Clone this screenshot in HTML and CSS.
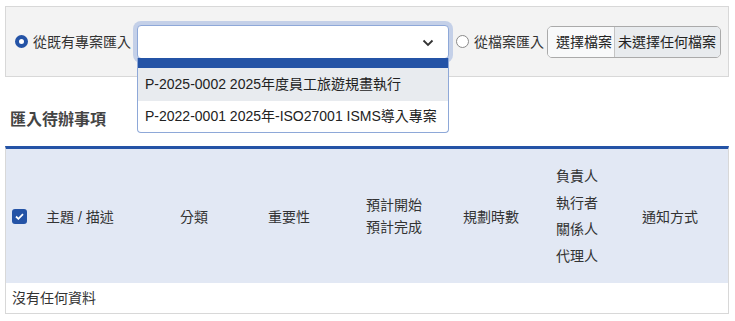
FILE: index.html
```html
<!DOCTYPE html>
<html lang="zh-Hant">
<head>
<meta charset="utf-8">
<link rel="stylesheet" href="styles.css">
</head>
<body>
<div class="panel">
  <label class="opt">
    <span class="radio checked"></span>
    <span class="opt-text">從既有專案匯入</span>
  </label>
  <div class="select">
    <svg class="chev" width="12" height="8" viewBox="0 0 12 8"><path d="M1.5 1.5 L6 6 L10.5 1.5" fill="none" stroke="#333" stroke-width="1.8"/></svg>
    <div class="list">
      <div class="list-sel"></div>
      <div class="list-item hover">P-2025-0002 2025年度員工旅遊規畫執行</div>
      <div class="list-item">P-2022-0001 2025年-ISO27001 ISMS導入專案</div>
    </div>
  </div>
  <label class="opt opt2">
    <span class="radio"></span>
    <span class="opt-text">從檔案匯入</span>
  </label>
  <div class="file">
    <span class="file-btn">選擇檔案</span>
    <span class="file-name">未選擇任何檔案</span>
  </div>
</div>

<h2 class="title">匯入待辦事項</h2>

<div class="table">
  <div class="thead">
    <div class="cell c0"><span class="check"><svg width="9" height="7" viewBox="0 0 9 7"><path d="M1 3.5 L3.4 5.8 L8 1.2" fill="none" stroke="#fff" stroke-width="1.8"/></svg></span></div>
    <div class="cell c1">主題 / 描述</div>
    <div class="cell c2">分類</div>
    <div class="cell c3">重要性</div>
    <div class="cell c4"><div class="two">預計開始<br>預計完成</div></div>
    <div class="cell c5">規劃時數</div>
    <div class="cell c6"><div class="four"><div>負責人</div><div>執行者</div><div>關係人</div><div>代理人</div></div></div>
    <div class="cell c7">通知方式</div>
  </div>
  <div class="empty">沒有任何資料</div>
</div>
</body>
</html>
```
FILE: styles.css
```css
* { box-sizing: border-box; }
body {
  margin: 0;
  background: #fff;
  font-family: "Liberation Sans", "Noto Sans CJK TC", sans-serif;
  font-size: 14px;
  color: #333;
}
.panel {
  margin: 6px 6px 0 5px;
  height: 71px;
  border: 1px solid #d8d8d8;
  background: #f3f3f3;
  display: flex;
  align-items: center;
  padding-left: 9px;
}
.opt {
  display: flex;
  align-items: center;
  gap: 5px;
}
.opt-text { color: #333; line-height: 20px; }
.radio {
  width: 13px;
  height: 13px;
  border-radius: 50%;
  border: 1px solid #8a8a8a;
  background: #fff;
  display: inline-block;
}
.radio.checked {
  border: 4px solid #2453a6;
}
.select {
  position: relative;
  margin-left: 6px;
  width: 312px;
  height: 34px;
  border: 1px solid #8ea8d8;
  border-radius: 4px;
  background: #fff;
  box-shadow: 0 0 0 4px #c4d0e8;
}
.chev {
  position: absolute;
  right: 14px;
  top: 13px;
}
.list {
  position: absolute;
  left: -1px;
  top: 32px;
  width: 312px;
  background: #fff;
  border: 1px solid #8ea8d8;
  border-top: none;
  border-radius: 0 0 4px 4px;
  z-index: 5;
}
.list-sel {
  height: 10px;
  background: #2453a6;
}
.list-item {
  height: 31px;
  line-height: 31px;
  padding-left: 7px;
  color: #222;
  white-space: nowrap;
}
.list-item.hover {
  background: #e8ebef;
  height: 33px;
  line-height: 33px;
}
.opt2 { margin-left: 7px; gap: 5px; }
.file {
  margin-left: 3px;
  display: flex;
  height: 32px;
  border: 1px solid #aaa;
  border-radius: 5px;
  overflow: hidden;
}
.file-btn {
  width: 67px;
  flex: none;
  background: #f8f9fa;
  border-right: 1px solid #c4c4c4;
  padding-left: 8px;
  line-height: 30px;
  color: #222;
  white-space: nowrap;
}
.file-name {
  width: 105px;
  flex: none;
  background: #e8ebee;
  padding-left: 3px;
  line-height: 30px;
  color: #222;
  white-space: nowrap;
}
.title {
  margin: 32px 0 0 10px;
  font-size: 16px;
  font-weight: bold;
  color: #444;
  line-height: 22px;
  height: 22px;
}
.table {
  margin: 15px 6px 0 5px;
  border-top: 3px solid #2453a6;
  border-left: 1px solid #d8d8d8;
  border-right: 1px solid #d8d8d8;
  border-bottom: 1px solid #d8d8d8;
}
.thead {
  display: flex;
  background: #e2e8f4;
  height: 134px;
  align-items: center;
}
.cell {
  padding-left: 8px;
  color: #333;
  white-space: nowrap;
}
.c0 { width: 32px; padding-left: 6px; display: flex; }
.c1 { width: 134px; }
.c2 { width: 88px; }
.c3 { width: 98px; }
.c4 { width: 97px; }
.c5 { width: 93px; }
.c6 { width: 86px; }
.c7 { flex: 1; }
.two { line-height: 22px; }
.four div { line-height: 26.5px; }
.check {
  width: 15px;
  height: 15px;
  border-radius: 3px;
  background: #2453a6;
  display: flex;
  align-items: center;
  justify-content: center;
}
.empty {
  height: 30px;
  line-height: 30px;
  padding-left: 6px;
  color: #333;
}
```
